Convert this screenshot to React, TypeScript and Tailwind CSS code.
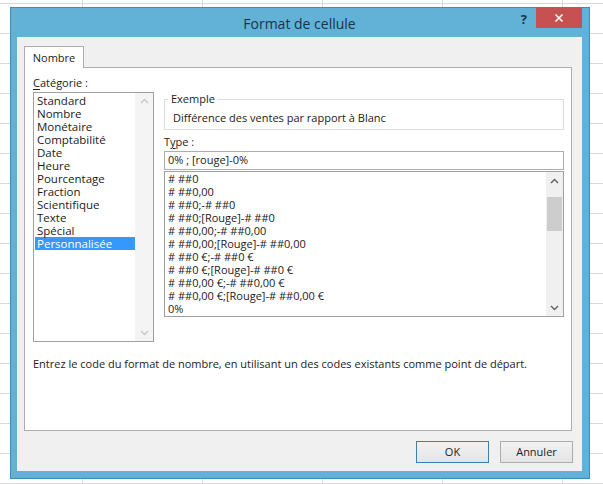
import React from "react";

const font = "font-['Open_Sans',_'Noto_Sans',_sans-serif]";

const categories = [
  "Standard",
  "Nombre",
  "Monétaire",
  "Comptabilité",
  "Date",
  "Heure",
  "Pourcentage",
  "Fraction",
  "Scientifique",
  "Texte",
  "Spécial",
  "Personnalisée",
];

const formats = [
  "# ##0",
  "# ##0,00",
  "# ##0;-# ##0",
  "# ##0;[Rouge]-# ##0",
  "# ##0,00;-# ##0,00",
  "# ##0,00;[Rouge]-# ##0,00",
  "# ##0 €;-# ##0 €",
  "# ##0 €;[Rouge]-# ##0 €",
  "# ##0,00 €;-# ##0,00 €",
  "# ##0,00 €;[Rouge]-# ##0,00 €",
  "0%",
];

function Chevron({ up, color }: { up?: boolean; color: string }) {
  return (
    <svg width="9" height="6" viewBox="0 0 9 6">
      <polyline
        points={up ? "1,5 4.5,1.5 8,5" : "1,1 4.5,4.5 8,1"}
        fill="none"
        stroke={color}
        strokeWidth="1.4"
      />
    </svg>
  );
}

export default function App() {
  return (
    <div
      className={`${font} w-[603px] h-[484px] overflow-hidden bg-white bg-[linear-gradient(to_right,#dadada_1px,transparent_1px),linear-gradient(to_bottom,#dadada_1px,transparent_1px)] bg-[size:120px_30px] bg-[position:82px_3px] pt-[7px] pl-[10px] text-[11px] text-[#1b1b1b]`}
    >
      <div className="w-[580px] h-[472px] border border-[#3d8bb8] bg-[#62b2d7] flex flex-col pl-[6px] pr-[7px] pb-[7px]">
        {/* title bar */}
        <div className="h-[29px] grid grid-cols-[1fr_auto_1fr] shrink-0">
          <div />
          <div className="flex items-center text-[14px] text-[#1a3347] pt-[1px]">
            Format de cellule
          </div>
          <div className="flex justify-end items-start">
            <div className="mt-[1px] mr-[9px] text-[13px] font-bold text-[#1e3548] leading-[20px]">
              ?
            </div>
            <div className="-mt-[1px] w-[46px] h-[21px] bg-[#c75050] flex items-center justify-center">
              <svg width="10" height="10" viewBox="0 0 10 10">
                <path d="M1.5 1.5 L8.5 8.5 M8.5 1.5 L1.5 8.5" stroke="#ffffff" strokeWidth="1.6" />
              </svg>
            </div>
          </div>
        </div>

        {/* body */}
        <div className="flex-1 bg-[#f0f0f0] flex flex-col pl-[7px] pr-[10px] pt-[9px]">
          {/* tab */}
          <div className="flex">
            <div className="w-[60px] h-[22px] bg-white border border-b-0 border-[#adadad] flex items-center justify-center -mb-px relative z-10 pt-[1px]">
              Nombre
            </div>
          </div>
          {/* panel */}
          <div className="h-[364px] bg-white border border-[#adadad] flex flex-col pl-[8px]">
            <div className="flex gap-[10px] items-start">
              {/* left column */}
              <div className="w-[121px] pt-[8px] flex flex-col">
                <div className="h-[14px] leading-[14px]">
                  <span className="underline underline-offset-2">C</span>atégorie :
                </div>
                <div className="mt-[2px] h-[250px] border border-[#a0a0a0] flex">
                  <div className="flex-1 pt-[1px] pl-[1px] text-[11.5px]">
                    {categories.map((c) => (
                      <div
                        key={c}
                        className={`h-[13px] leading-[13px] pl-[2px] ${
                          c === "Personnalisée" ? "bg-[#3399ff] text-white" : ""
                        }`}
                      >
                        {c}
                      </div>
                    ))}
                  </div>
                  <div className="w-[18px] bg-[#f4f4f4] flex flex-col justify-between items-center py-[5px]">
                    <Chevron up color="#c8c8c8" />
                    <Chevron color="#c8c8c8" />
                  </div>
                </div>
              </div>

              {/* right column */}
              <div className="w-[400px] mt-[24px] flex flex-col">
                <fieldset className="border border-[#dcdcdc] pt-[5px] pb-[4px]">
                  <legend className="ml-[3px] px-[3px] h-[14px] leading-[14px]">Exemple</legend>
                  <div className="h-[14px] leading-[14px] pl-[8px]">
                    Différence des ventes par rapport à Blanc
                  </div>
                </fieldset>
                <div className="mt-[5px] h-[14px] leading-[14px]">
                  T<span className="underline underline-offset-2">y</span>pe :
                </div>
                <div className="mt-[2px] h-[19px] border border-[#abadb3] flex items-center pl-[3px]">
                  0% ; [rouge]-0%
                </div>
                <div className="mt-[1px] h-[146px] border border-[#a0a0a0] flex">
                  <div className="flex-1 pl-[3px]">
                    {formats.map((f) => (
                      <div key={f} className="h-[13px] leading-[13px] whitespace-pre">
                        {f}
                      </div>
                    ))}
                  </div>
                  <div className="w-[17px] bg-[#f0f0f0] flex flex-col items-center">
                    <div className="h-[17px] flex items-center justify-center">
                      <Chevron up color="#606060" />
                    </div>
                    <div className="mt-[8px] w-[15px] h-[34px] bg-[#cdcdcd]" />
                    <div className="flex-1" />
                    <div className="h-[17px] flex items-center justify-center">
                      <Chevron color="#606060" />
                    </div>
                  </div>
                </div>
              </div>
            </div>
            <div className="mt-[15px] h-[14px] leading-[14px]">
              Entrez le code du format de nombre, en utilisant un des codes existants comme point de départ.
            </div>
          </div>

          {/* buttons */}
          <div className="flex justify-end gap-[11px] mt-[10px] -mr-[1px]">
            <div className="w-[73px] h-[22px] border border-[#3c7fb1] bg-[linear-gradient(#f2f2f2,#e4e4e4)] flex items-center justify-center">
              OK
            </div>
            <div className="w-[73px] h-[22px] border border-[#acacac] bg-[linear-gradient(#f2f2f2,#e4e4e4)] flex items-center justify-center">
              Annuler
            </div>
          </div>
        </div>
      </div>
    </div>
  );
}
